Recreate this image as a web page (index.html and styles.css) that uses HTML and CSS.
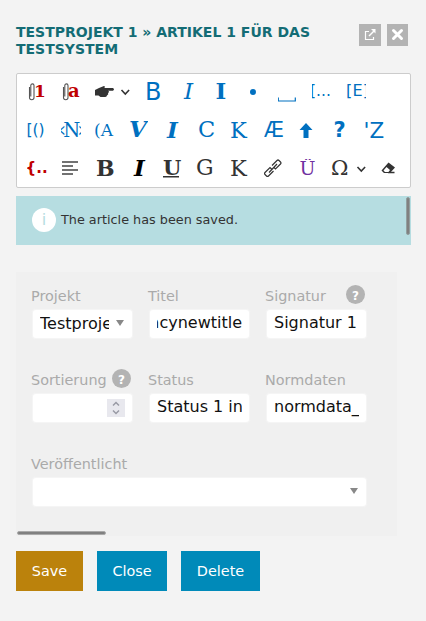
FILE: index.html
```html
<!DOCTYPE html>
<html lang="de">
<head>
<meta charset="utf-8">
<title>Artikel</title>
<link rel="stylesheet" href="styles.css">
</head>
<body>
<header class="header">
  <h1>Testprojekt 1 » Artikel 1 für das Testsystem</h1>
  <div class="window-actions">
    <button class="wbtn" aria-label="Open"><svg width="22" height="22" viewBox="0 0 22 22" fill="none" stroke="#fff"><path d="M10 7.500H6.500v8h8V13" stroke-width="1.200"/><path d="M10 12l5-5" stroke-width="1.500"/><path d="M12 5h4.500v4.500z" fill="#fff" stroke="none"/></svg></button>
    <button class="wbtn narrow" aria-label="Close window"><svg width="21" height="22" viewBox="0 0 21 22"><path d="M6.500 6.500l8 8m0-8l-8 8" stroke="#fff" stroke-width="3" stroke-linecap="round"/></svg></button>
  </div>
</header>
<div class="toolbar">
  <div class="row">
    <svg class="ic"><path class="clip" d="M2.500 5v10.500a2.200 2.200 0 0 0 4.500 0V3.500a1.600 1.600 0 0 0-3.200 0v11"/><text class="serif b red" x="7" y="14.700" font-size="17">1</text></svg>
    <svg class="ic"><path class="clip" d="M2.500 5v10.500a2.200 2.200 0 0 0 4.500 0V3.500a1.600 1.600 0 0 0-3.200 0v11"/><text class="serif b red" x="7" y="14.700" font-size="18">a</text></svg>
    <svg class="ic"><path class="dark" d="M0 8l4-2 5-2q1.500 0 .500 2H18q2 1.300 0 2.700h-5q2 1 0 2.400 1 1.500-1 2.300-.500 1.600-2 1.600H5.500L3.500 13.500H0z"/></svg>
    <svg class="chev"><path d="M1.500 8l3.800 4 3.800-4"/></svg>
    <svg class="ic"><text x="2" y="18" font-size="24">B</text></svg>
    <svg class="ic"><text class="serif i" x="7" y="17" font-size="23">I</text></svg>
    <svg class="ic"><text class="serif b" x="5.500" y="17" font-size="23">I</text></svg>
    <svg class="ic"><circle cx="9" cy="10" r="3"/></svg>
    <svg class="ic"><path d="M.3 15.500v3.500h17v-3.500" fill="none" stroke="#0070c0" stroke-width="1.200"/></svg>
    <svg class="ic"><text x="-2" y="14" font-size="15.500">[...</text></svg>
    <svg class="ic"><text x="0" y="14" font-size="16" textLength="23">[E]</text></svg>
  </div>
  <div class="row">
    <svg class="ic"><text x="-.500" y="14" font-size="15.500">[()</text></svg>
    <svg class="ic"><text x="-2" y="14.500" font-size="17" textLength="6" lengthAdjust="spacingAndGlyphs">&lt;</text><text class="serif" x="2.200" y="15.500" font-size="19.500">N</text><text x="17.500" y="14.500" font-size="17" textLength="6" lengthAdjust="spacingAndGlyphs">&gt;</text></svg>
    <svg class="ic"><text class="serif" x="-1" y="14.500" font-size="17">(A</text></svg>
    <svg class="ic"><text class="serif b i" x="1" y="16" font-size="23">V</text></svg>
    <svg class="ic"><text class="serif b i" x="5" y="17" font-size="23">I</text></svg>
    <svg class="ic"><text class="serif" x="2" y="15.500" font-size="22.500">C</text></svg>
    <svg class="ic"><text class="serif" x="0" y="17" font-size="22.500">K</text></svg>
    <svg class="ic"><text x="0" y="15.500" font-size="22" textLength="20" lengthAdjust="spacingAndGlyphs">Æ</text></svg>
    <svg class="ic"><path d="M9 2l6.500 7H11.500v8h-5V9h-4z"/></svg>
    <svg class="ic"><text class="b" x="2.500" y="16" font-size="21">?</text></svg>
    <svg class="ic"><text x="-1.500" y="17" font-size="21.500">'Z</text></svg>
  </div>
  <div class="row">
    <svg class="ic"><text class="b red" x="-1.500" y="13.500" font-size="15">{..</text></svg>
    <svg class="ic"><path d="M1 3h16M1 7h11M1 11h16M1 15h11" fill="none" stroke="#444" stroke-width="1.300"/></svg>
    <svg class="ic"><text class="serif b dark" x="1" y="16.500" font-size="22">B</text></svg>
    <svg class="ic"><text class="serif b i black" x="6" y="16.500" font-size="23">I</text></svg>
    <svg class="ic"><text class="serif b dark" x="1" y="15.500" font-size="21">U</text><path class="dark" d="M1 17h16v1.500H1z"/></svg>
    <svg class="ic"><text class="serif dark" x="0" y="15.500" font-size="22">G</text></svg>
    <svg class="ic"><text class="serif dark" x="0" y="16.500" font-size="22.500">K</text></svg>
    <svg class="ic"><g fill="none" stroke="#333" stroke-width="1.200"><path d="M8 6.500l5-5q1-1 2 0l1.500 1.500q1 1 0 2l-5 5-1.500-1.500M9.500 12l-5 5q-1 1-2 0L1 15.500q-1-1 0-2l5-5L7.500 10M5 13.500l8-8.500"/></g></svg>
    <svg class="ic"><text class="serif purple" x="2.500" y="16" font-size="19">Ü</text></svg>
    <svg class="ic"><text class="serif dark" x="0" y="16" font-size="21">Ω</text></svg>
    <svg class="chev"><path d="M1.500 8l3.800 4 3.800-4"/></svg>
    <svg class="ic"><path class="dark" fill-rule="evenodd" d="M9.500 3.500l6.500 5-5 5.500H5L2.500 11.500zM7.500 8L4.500 11.500l1.500 1.500H9.500l1.500-2z"/><path class="dark" d="M10 12.800h5.500v1.500H9z"/></svg>
  </div>
</div>
<div class="message">
  <span class="info">i</span><span>The article has been saved.</span>
  <i class="vscroll"></i>
</div>
<main class="panel">
  <div class="field"><div class="label">Projekt</div><div class="input select"><span class="value">Testprojekt 1</span><svg class="tri"><path d="M0 0h8L4 6z"/></svg></div></div>
  <div class="field"><div class="label">Titel</div><div class="input end"><span class="value">legacynewtitle</span></div></div>
  <div class="field"><div class="label">Signatur<b class="help right">?</b></div><div class="input"><span class="value">Signatur 1</span></div></div>
  <div class="field"><div class="label">Sortierung<b class="help">?</b></div><div class="input number"><svg class="spin"><path d="M6 6.500L9 3.500l3 3M6 11.500l3 3 3-3"/></svg></div></div>
  <div class="field"><div class="label">Status</div><div class="input"><span class="value">Status 1 in</span></div></div>
  <div class="field"><div class="label">Normdaten</div><div class="input"><span class="value">normdata_</span></div></div>
  <div class="field wide"><div class="label">Veröffentlicht</div><div class="input select"><span class="value"></span><svg class="tri"><path d="M0 0h8L4 6z"/></svg></div></div>
  <i class="hscroll"></i>
</main>
<footer class="buttons">
  <button class="btn save">Save</button><button class="btn close">Close</button><button class="btn delete">Delete</button>
</footer>
</body>
</html>
```
FILE: styles.css
```css
* { box-sizing: border-box; }
body { margin: 0; padding: 24px 15px 0 16px; height: 621px; overflow: hidden; background: #f3f3f3; font-family: "DejaVu Sans", sans-serif; font-size: 14.4px; color: #333; }
button { border: 0; padding: 0; font: inherit; }
.header { display: flex; justify-content: space-between; height: 49px; }
h1 { margin: 0; width: 310px; font-size: 14px; line-height: 17px; color: #136c75; text-transform: uppercase; }
.window-actions { display: flex; gap: 6px; margin-right: 3px; }
.wbtn { width: 22px; height: 22px; background: #b3b3b3; }
.wbtn.narrow { width: 21px; }
.wbtn svg { display: block; }
.toolbar { height: 115px; padding: 8px 0 0 10px; background: #fff; border: 1px solid #ccc; border-radius: 2px; }
.row { display: flex; height: 38.5px; }
.ic { flex: none; width: 20px; height: 20px; margin-right: 13.8px; overflow: hidden; fill: #0070c0; }
.chev { flex: none; width: 11px; height: 20px; margin: 0 12px 0 -8.5px; fill: none; stroke: #333; stroke-width: 1.6; }
.serif { font-family: "DejaVu Serif", serif; }
.b { font-weight: bold; }
.i { font-style: italic; }
.red { fill: #c00000; }
.dark { fill: #333; }
.black { fill: #000; }
.purple { fill: #7030a0; }
.clip { fill: none; stroke: #555; stroke-width: 1.1; }
.message { position: relative; display: flex; align-items: center; gap: 5px; height: 49px; margin-top: 8px; padding: 0 16px 2px; background: #b6dde1; font-size: 12.8px; }
.info { width: 24px; height: 24px; border-radius: 50%; background: #fff; color: #b6dde1; font-size: 16px; line-height: 24px; text-align: center; }
.vscroll { position: absolute; right: 1px; top: 1px; width: 4px; height: 38px; border-radius: 2px; background: #808080; border: 0.5px solid #929f9f; }
.panel { position: relative; display: grid; grid-template-columns: 99px 99px 100px; grid-auto-rows: 84px; column-gap: 18px; width: 381px; height: 264px; margin-top: 27px; padding: 13px 15px 0; background: #f0f0f0; }
.label { position: relative; display: flex; height: 22px; align-items: center; color: #aaa; line-height: 22px; }
.help { position: absolute; right: -1px; top: 0; width: 19px; height: 19px; border-radius: 50%; background: #b3b3b3; color: #fff; font-size: 12px; line-height: 22px; text-align: center; }
.help.right { right: 0; }
.input { display: flex; align-items: center; width: 99px; height: 28px; margin: 3px 0 0 2px; padding: 0 7px; border-radius: 3px; background: #fff; color: #111; font-size: 16px; box-shadow: 0 0 1px 1px #f5f5f5; }
.value { flex: 1; min-width: 0; overflow: hidden; white-space: nowrap; line-height: 24px; margin-top: -2px; }
.end .value { display: flex; justify-content: flex-end; }
.select .value { margin-top: 0; }
.tri { width: 8px; height: 6px; margin: -2px 1px 0 7px; fill: #888; }
.number { justify-content: flex-end; }
.spin { width: 18px; height: 18px; margin-top: -1px; background: #e8e8ee; fill: none; stroke: #999aa5; stroke-width: 1.5; }
.wide { grid-column: 1 / -1; }
.wide .input { width: 333px; }
.hscroll { position: absolute; left: 1px; bottom: 1px; width: 89px; height: 4px; border-radius: 2px; background: #808080; border: 0.5px solid #aaa; }
.buttons { display: flex; gap: 14px; margin-top: 15px; }
.btn { height: 40px; color: #fff; background: #008ab9; }
.save { width: 67px; background: #bb820c; }
.close { width: 70px; }
.delete { width: 79px; }
```
